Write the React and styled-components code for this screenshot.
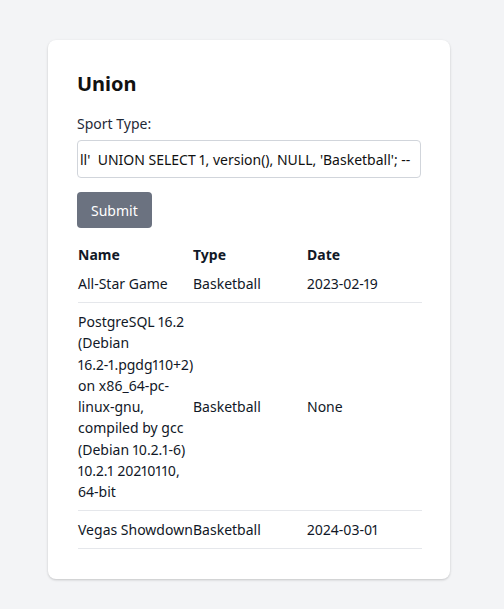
import React from 'react'
import styled, { createGlobalStyle } from 'styled-components'

const GlobalStyle = createGlobalStyle`
  html, body {
    margin: 0;
    padding: 0;
    background: #f3f4f6;
    font-family: "Noto Sans", "Open Sans", sans-serif;
    font-variant-numeric: proportional-nums;
    color: #111827;
  }
  * { box-sizing: border-box; }
`

const Page = styled.div`
  min-height: 609px;
  padding: 40px 54px 32px 48px;
`

const Card = styled.div`
  width: 402px;
  background: #ffffff;
  border-radius: 8px;
  box-shadow: 0 1px 3px rgba(0, 0, 0, 0.12), 0 1px 2px rgba(0, 0, 0, 0.08);
  padding: 29px 29px 30px 29px;
`

const Title = styled.h2`
  margin: 0 0 15px 0;
  font-size: 20px;
  line-height: 30px;
  font-weight: 700;
  color: #111;
`

const Label = styled.label`
  display: block;
  font-size: 14px;
  line-height: 20px;
  margin-bottom: 6px;
  color: #1f2937;
`

const Input = styled.input`
  display: block;
  width: 100%;
  height: 38px;
  border: 1px solid #d1d5db;
  border-radius: 4px;
  padding: 0 6px 0 2px;
  font-family: inherit;
  font-variant-numeric: proportional-nums;
  font-size: 14px;
  color: #111;
  background: #fff;
  outline: none;
  margin-bottom: 14px;
`

const Button = styled.button`
  display: block;
  height: 36px;
  padding: 0 14px;
  border: none;
  border-radius: 4px;
  background: #6b7280;
  color: #fff;
  font-family: inherit;
  font-size: 14px;
  cursor: pointer;
  margin-bottom: 15px;
`

const Table = styled.table`
  width: 344px;
  margin-left: 1px;
  table-layout: fixed;
  border-collapse: collapse;
  font-size: 14px;
  line-height: 1.52;
`

const Col = styled.col`
  width: ${({ w }) => w};
`

const Th = styled.th`
  text-align: left;
  font-weight: 700;
  padding: 1px 0 0 0;
`

const Row = styled.tr`
  border-bottom: 1px solid #e5e7eb;
`

const Td = styled.td`
  padding: 8px 0 7.5px 0;
  vertical-align: middle;
`

const NoWrap = styled.span`
  white-space: nowrap;
`

const rows = [
  { name: 'All-Star Game', type: 'Basketball', date: '2023-02-19' },
  {
    name: (
      <>
        PostgreSQL 16.2 (Debian <NoWrap>16.2-1.pgdg110+2)</NoWrap> on x86_64-pc-linux-gnu,
        compiled by gcc (Debian 10.2.1-6) 10.2.1 20210110, 64-bit
      </>
    ),
    type: 'Basketball',
    date: 'None',
  },
  { name: 'Vegas Showdown', type: 'Basketball', date: '2024-03-01' },
]

export default function App() {
  return (
    <Page>
      <GlobalStyle />
      <Card>
        <Title>Union</Title>
        <Label htmlFor="sport">Sport Type:</Label>
        <Input
          id="sport"
          readOnly
          value="ll'  UNION SELECT 1, version(), NULL, 'Basketball'; --"
        />
        <Button>Submit</Button>
        <Table>
          <colgroup>
            <Col w="115px" />
            <Col w="114px" />
            <Col w="auto" />
          </colgroup>
          <thead>
            <tr>
              <Th>Name</Th>
              <Th>Type</Th>
              <Th>Date</Th>
            </tr>
          </thead>
          <tbody>
            {rows.map((r, i) => (
              <Row key={i}>
                <Td>{r.name}</Td>
                <Td>{r.type}</Td>
                <Td>{r.date}</Td>
              </Row>
            ))}
          </tbody>
        </Table>
      </Card>
    </Page>
  )
}
